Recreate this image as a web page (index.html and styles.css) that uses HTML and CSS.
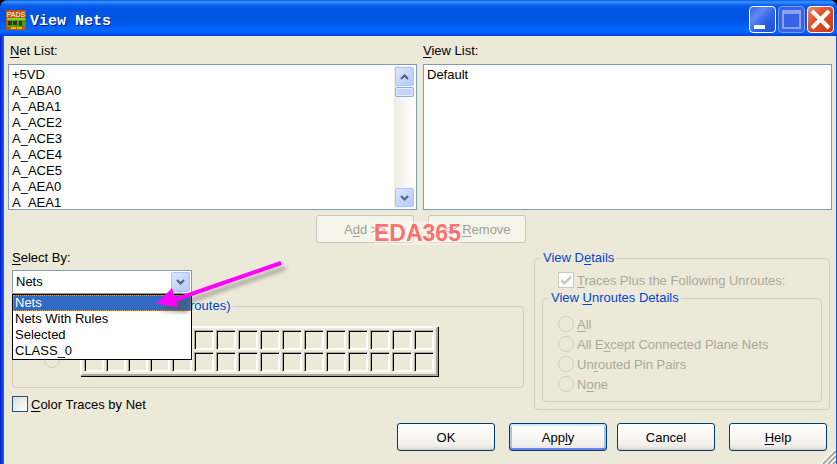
FILE: index.html
```html
<!DOCTYPE html>
<html lang="en">
<head>
    <meta charset="UTF-8">
    <meta name="viewport" content="width=device-width, initial-scale=1.0">
    <title>View Nets</title>
    <link rel="stylesheet" href="styles.css">
</head>
<body>
    <div class="window">
        <header class="titlebar">
            <svg class="app-icon" viewBox="0 0 20 20" shape-rendering="crispEdges">
                <rect width="20" height="20" fill="#b8560c"/>
                <rect x="1" y="8" width="18" height="9" fill="#4f9a10"/>
                <rect x="1" y="8" width="18" height="2" fill="#8ccf30"/>
                <rect x="2" y="11" width="4" height="4" fill="#2a3a18"/>
                <rect x="7" y="11" width="4" height="4" fill="#2a3a18"/>
                <rect x="13" y="11" width="3" height="5" fill="#2a3a18"/>
                <rect x="5" y="17" width="5" height="2" fill="#f4b400"/>
                <rect x="11" y="17" width="5" height="2" fill="#f4b400"/>
                <text x="10" y="7" font-family="Liberation Sans" font-size="7" text-anchor="middle" fill="#fff">PADS</text>
            </svg>
            <h1>View Nets</h1>
            <div class="window-buttons">
                <button class="win-btn" aria-label="Minimize">
                    <svg viewBox="0 0 25 25"><path d="M4 20H15" stroke="#fff" stroke-width="4"/></svg>
                </button>
                <button class="win-btn dim" aria-label="Maximize" disabled>
                    <svg viewBox="0 0 25 25"><path d="M4 21V5H21V21Z" fill="none" stroke="#8f9ff0" stroke-width="2"/><path d="M3 5H22" stroke="#8f9ff0" stroke-width="4"/></svg>
                </button>
                <button class="win-btn close" aria-label="Close">
                    <svg viewBox="0 0 25 25"><path d="M4 4L21 21M21 4L4 21" stroke="#fff" stroke-width="4"/></svg>
                </button>
            </div>
        </header>

        <main class="client">
            <div class="lists">
                <div class="list-col">
                    <label for="netList"><u>N</u>et List:</label>
                    <div class="listbox">
                        <select id="netList" size="9">
                            <option>+5VD</option>
                            <option>A_ABA0</option>
                            <option>A_ABA1</option>
                            <option>A_ACE2</option>
                            <option>A_ACE3</option>
                            <option>A_ACE4</option>
                            <option>A_ACE5</option>
                            <option>A_AEA0</option>
                            <option>A_AEA1</option>
                        </select>
                        <div class="scrollbar">
                            <button class="arrow" aria-label="Scroll up"><svg viewBox="0 0 9 6"><path d="M1 5L4.500 1.500L8 5"/></svg></button>
                            <div class="thumb"></div>
                            <button class="arrow down" aria-label="Scroll down"><svg viewBox="0 0 9 6"><path d="M1 1L4.500 4.500L8 1"/></svg></button>
                        </div>
                    </div>
                </div>
                <div class="list-col">
                    <label for="viewList"><u>V</u>iew List:</label>
                    <div class="listbox">
                        <select id="viewList" size="9">
                            <option>Default</option>
                        </select>
                    </div>
                </div>
            </div>

            <div class="transfer">
                <button class="btn" disabled>A<u>d</u>d &gt;&gt;</button>
                <button class="btn" disabled>&lt;&lt; <u>R</u>emove</button>
                <span class="watermark">EDA365</span>
            </div>

            <div class="options">
                <div class="left">
                    <label for="selectBy"><u>S</u>elect By:</label>
                    <div class="combo">
                        <select id="selectBy">
                            <option>Nets</option>
                            <option>Nets With Rules</option>
                            <option>Selected</option>
                            <option>CLASS_0</option>
                        </select>
                        <span class="combo-arrow"><svg viewBox="0 0 9 6"><path d="M1 1L4.500 4.500L8 1"/></svg></span>
                        <ul class="menu">
                            <li class="active">Nets</li>
                            <li>Nets With Rules</li>
                            <li>Selected</li>
                            <li>CLASS_0</li>
                        </ul>
                        <svg class="pointer" viewBox="0 0 140 60">
                            <defs>
                                <filter id="soft" x="-20%" y="-20%" width="140%" height="150%"><feGaussianBlur stdDeviation="2"/></filter>
                            </defs>
                            <path d="M129 8L27 43M8 49L24 34L30 51Z" transform="translate(4 5)" fill="#555" stroke="#555" stroke-width="3" opacity=".6" filter="url(#soft)"/>
                            <path d="M129 8L22 45" stroke="#f0f" stroke-width="4"/>
                            <path d="M4 49L20 33L26 52Z" fill="#f0f"/>
                        </svg>
                    </div>
                    <fieldset class="group color-group">
                        <legend>Color By Net (Pins, Vias, Unroutes)</legend>
                        <input type="radio" name="color" aria-label="Color" disabled>
                        <div class="swatches">
                            <i></i><i></i><i></i><i></i><i></i><i></i><i></i><i></i>
                            <i></i><i></i><i></i><i></i><i></i><i></i><i></i><i></i>
                            <i></i><i></i><i></i><i></i><i></i><i></i><i></i><i></i>
                            <i></i><i></i><i></i><i></i><i></i><i></i><i></i><i></i>
                        </div>
                    </fieldset>
                    <label class="check"><input type="checkbox"><span><u>C</u>olor Traces by Net</span></label>
                </div>

                <fieldset class="group details">
                    <legend>View D<u>e</u>tails</legend>
                    <label class="check off"><input type="checkbox" checked disabled><span><u>T</u>races Plus the Following Unroutes:</span></label>
                    <fieldset class="group unroutes">
                        <legend>View <u>U</u>nroutes Details</legend>
                        <label class="check off"><input type="radio" name="unroutes" disabled><span><u>A</u>ll</span></label>
                        <label class="check off"><input type="radio" name="unroutes" disabled><span>All E<u>x</u>cept Connected Plane Nets</span></label>
                        <label class="check off"><input type="radio" name="unroutes" disabled><span>Un<u>r</u>outed Pin Pairs</span></label>
                        <label class="check off"><input type="radio" name="unroutes" disabled><span>N<u>o</u>ne</span></label>
                    </fieldset>
                </fieldset>
            </div>

            <footer class="actions">
                <button class="btn">OK</button>
                <button class="btn default">App<u>l</u>y</button>
                <button class="btn gap">Cancel</button>
                <button class="btn"><u>H</u>elp</button>
            </footer>
            <svg class="grip" viewBox="0 0 16 16"><path d="M1 16L16 1M6 16L16 6M11 16L16 11" stroke="#fff" stroke-width="2"/><path d="M3 16L16 3M8 16L16 8M13 16L16 13" stroke="#aca899" stroke-width="2"/></svg>
        </main>
    </div>
</body>
</html>
```
FILE: styles.css
```css
* {
    box-sizing: border-box;
}
body {
    margin: 0;
    background: #000;
    font: 13px/16px "Liberation Sans", Arial, sans-serif;
    color: #000;
}
button, select, input {
    font: inherit;
    color: inherit;
    margin: 0;
    border-radius: 0;
}
u {
    text-underline-offset: 2px;
}
.window {
    min-height: 100vh;
    display: flex;
    flex-direction: column;
    border-radius: 8px 8px 0 0;
    overflow: hidden;
    background: linear-gradient(90deg, #0019cf, #0a3fe0 2px, #166af0 4px, #0c50e0 5px);
}
.titlebar {
    height: 36px;
    display: flex;
    align-items: center;
    gap: 4px;
    padding: 3px 3px 0 6px;
    background: linear-gradient(#0a5be8 0, #3a92ff 2px, #0a62f0 5px, #0054e3 9px, #0055e5 20px, #0066ff 30px, #0060f8 33px, #003dd7 36px);
}
.app-icon {
    width: 20px;
    height: 20px;
}
h1 {
    flex: 1;
    margin: 0;
    padding-top: 4px;
    font: bold 15px/18px "Liberation Mono", "Courier New", monospace;
    color: #fff;
    text-shadow: 1px 1px #0a1883;
}
.window-buttons {
    display: flex;
    gap: 2px;
}
.win-btn {
    width: 27px;
    height: 27px;
    padding: 0;
    border: 1px solid #fff;
    border-radius: 4px;
    background: linear-gradient(135deg, #3c68dc, #5f88f0 30%, #2f62e8 60%, #1c4fd8);
}
.win-btn svg {
    display: block;
    width: 25px;
    height: 25px;
}
.win-btn.dim {
    border-color: #7d95ee;
    background: #3565e6;
}
.win-btn.close {
    background: linear-gradient(135deg, #f0906c, #e2512a 40%, #c93a10);
}
.client {
    position: relative;
    flex: 1;
    margin: 0 1px 0 4px;
    padding: 7px 4px 0;
    background: #ece9d8;
}
.lists {
    display: grid;
    grid-template-columns: 1fr 1fr;
    gap: 6px;
}
.list-col label {
    display: block;
    padding: 0 2px;
    margin-bottom: 5px;
}
.list-col:last-child label {
    padding: 0;
}
.listbox {
    display: flex;
    height: 146px;
    padding: 1px;
    border: 1px solid #7f9db9;
    background: #fff;
}
.listbox select {
    flex: 1;
    height: 142px;
    padding: 1px 0;
    border: 0;
    outline: 0;
    background: #fff;
    overflow: hidden;
}
.listbox option {
    padding: 0 2px;
    height: 16px;
    min-height: 16px;
    line-height: 16px;
}
.scrollbar {
    width: 21px;
    display: flex;
    flex-direction: column;
    background: linear-gradient(90deg, #eeede5, #fff);
    padding: 1px;
}
.arrow, .combo-arrow {
    display: flex;
    align-items: center;
    justify-content: center;
    padding: 0;
    border: 1px solid #b0c4f4;
    border-radius: 2px;
    background: linear-gradient(135deg, #dce6ff, #b4c8f8);
}
.arrow {
    height: 19px;
}
.arrow.down {
    margin-top: auto;
}
.arrow svg, .combo-arrow svg {
    width: 9px;
    height: 6px;
    fill: none;
    stroke: #4d6185;
    stroke-width: 2;
}
.thumb {
    height: 10px;
    margin-top: 1px;
    border: 1px solid #8fafe8;
    border-radius: 2px;
    background: #c4d4fc;
    box-shadow: inset 0 0 0 1px #e4ecff;
}
.btn {
    width: 98px;
    height: 28px;
    padding: 2px 0 0;
    border: 1px solid #003c74;
    border-radius: 3px;
    background: linear-gradient(#fff, #f4f3ee 70%, #ecebe4 88%, #d6d0c5);
}
.btn.default {
    box-shadow: inset 0 2px #cee7ff, inset 0 -2px #6982ee, inset 2px 0 #a8c0f4, inset -2px 0 #a8c0f4;
}
.btn:disabled {
    border-color: #c9c7ba;
    background: #f5f4ea;
    color: #a1a192;
}
.transfer {
    position: relative;
    display: flex;
    justify-content: center;
    gap: 14px;
    margin-top: 5px;
    padding-left: 2px;
}
.watermark {
    position: absolute;
    left: 50%;
    top: 6px;
    margin-left: -46px;
    font-size: 23px;
    line-height: 24px;
    font-weight: bold;
    color: rgba(255, 70, 70, .75);
    background: rgba(255, 255, 255, .3);
}
.options {
    display: flex;
    gap: 10px;
    margin-top: 7px;
    padding: 0 2px 0 4px;
}
.left {
    flex: 1;
}
.combo {
    position: relative;
    display: flex;
    width: 180px;
    height: 24px;
    margin-top: 4px;
}
.combo select {
    flex: 1;
    appearance: none;
    padding: 0 3px;
    border: 1px solid #7f9db9;
    background: #fff;
}
.combo-arrow {
    position: absolute;
    right: 2px;
    top: 2px;
    width: 19px;
    height: 20px;
    pointer-events: none;
}
.menu {
    position: absolute;
    z-index: 1;
    left: 0;
    right: 0;
    top: 24px;
    margin: 0;
    padding: 0;
    border: 1px solid #000;
    background: #fff;
    list-style: none;
}
.menu li {
    padding: 0 2px;
}
.menu .active {
    background: #316ac5;
    color: #fff;
    outline: 1px dotted #e0a040;
    outline-offset: -1px;
}
.pointer {
    position: absolute;
    z-index: 2;
    left: 140px;
    top: -15px;
    width: 140px;
    height: 60px;
}
.group {
    min-width: 0;
    margin: 0;
    border: 1px solid #d0d0bf;
    border-radius: 4px;
}
legend {
    height: 16px;
    padding: 0 2px;
    color: #0046d5;
}
.color-group {
    display: flex;
    align-items: flex-end;
    height: 90px;
    margin-top: 4px;
    padding: 0 0 11px 31px;
}
.color-group legend {
    margin-left: -19px;
}
input[type="radio"], input[type="checkbox"] {
    appearance: none;
    flex: none;
    width: 16px;
    height: 16px;
    border: 1px solid #1c5180;
    background: linear-gradient(135deg, #dcdcd7, #fff);
}
input[type="radio"]:disabled {
    border-color: #d0cfbf;
    border-radius: 50%;
    background: transparent;
}
input[type="checkbox"]:disabled {
    border-color: #cac8bb;
    background: #fff;
}
input[type="checkbox"]:checked::before {
    content: "";
    display: block;
    width: 10px;
    height: 10px;
    margin: 2px;
    background: #cac8bb;
    clip-path: polygon(0 35%, 35% 65%, 100% 0, 100% 35%, 35% 100%, 0 70%);
}
.color-group input {
    margin-bottom: 8px;
}
.swatches {
    display: grid;
    grid-template-columns: repeat(16, 20px);
    gap: 2px;
    margin-left: 20px;
    padding: 2px;
    border: 2px solid;
    border-color: #fff #aca899 #aca899 #fff;
    box-shadow: inset 0 0 #fff, 1px 1px #000;
}
.swatches i {
    height: 20px;
    border: 1px solid;
    border-color: #aca899 #fff #fff #aca899;
    box-shadow: inset 1px 1px #000, inset -1px -1px #fff;
}
.check {
    display: flex;
    align-items: center;
    gap: 3px;
    height: 20px;
}
.check span {
    padding-top: 1px;
}
.left > .check {
    margin-top: 6px;
}
.off {
    color: #aca899;
}
.details {
    width: 296px;
    height: 160px;
    padding: 0 7px;
}
.details > legend {
    margin-left: -1px;
}
.details > .check {
    height: 16px;
    margin: 6px 0 2px 16px;
}
.unroutes {
    height: 112px;
    padding: 8px 15px 0;
}
.unroutes legend {
    margin-left: -9px;
}
.actions {
    display: flex;
    justify-content: flex-end;
    gap: 14px;
    margin-top: 9px;
    padding-right: 5px;
}
.btn.gap {
    margin-left: -4px;
}
.grip {
    position: absolute;
    right: 0;
    bottom: 0;
    width: 16px;
    height: 16px;
}
```
